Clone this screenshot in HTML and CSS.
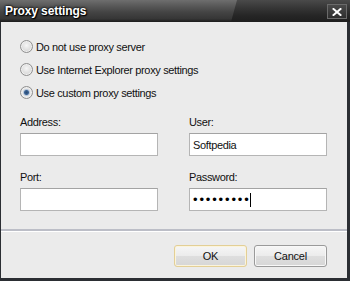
FILE: index.html
```html
<!DOCTYPE html>
<html>
<head>
<meta charset="utf-8">
<link rel="stylesheet" href="styles.css">
</head>
<body>
<div class="window">
  <div class="titlebar">
    <span class="title">Proxy settings</span>
    <span class="close">
      <svg width="10" height="8" viewBox="0 0 10 8"><path d="M1.5 1 L8.5 7 M8.5 1 L1.5 7" stroke="#fff" stroke-width="2" stroke-linecap="square" fill="none"/></svg>
    </span>
  </div>
  <div class="client">
    <div class="main">
      <div class="radios">
        <div class="radio-row"><span class="radio"></span><span class="txt">Do not use proxy server</span></div>
        <div class="radio-row"><span class="radio"></span><span class="txt">Use Internet Explorer proxy settings</span></div>
        <div class="radio-row"><span class="radio checked"></span><span class="txt">Use custom proxy settings</span></div>
      </div>
      <div class="fields">
        <div class="field"><div class="label">Address:</div><div class="textbox"></div></div>
        <div class="field"><div class="label">User:</div><div class="textbox"><span class="value">Softpedia</span></div></div>
        <div class="field"><div class="label">Port:</div><div class="textbox"></div></div>
        <div class="field"><div class="label">Password:</div><div class="textbox"><span class="dots">•••••••••</span><span class="caret"></span></div></div>
      </div>
    </div>
    <div class="footer">
      <button class="btn default">OK</button>
      <button class="btn">Cancel</button>
    </div>
  </div>
</div>
</body>
</html>
```
FILE: styles.css
```css
html, body {
  margin: 0;
  padding: 0;
}
body {
  width: 350px;
  height: 281px;
  overflow: hidden;
  background: #2b2e33;
  font-family: "Liberation Sans", Arial, sans-serif;
  font-size: 11px;
  letter-spacing: -0.35px;
  color: #111;
}
.window {
  display: flex;
  flex-direction: column;
  height: 281px;
}
.titlebar {
  position: relative;
  height: 22px;
  box-sizing: border-box;
  display: flex;
  justify-content: space-between;
  align-items: flex-start;
  padding: 0 3px 0 5px;
  background: linear-gradient(to bottom, #6e6e6e 0%, #5a5a5a 25%, #444 55%, #363636 85%, #1c1c1c 100%);
  overflow: hidden;
}
.titlebar::after {
  content: "";
  position: absolute;
  top: 0;
  right: 0;
  bottom: 0;
  width: 119px;
  background: linear-gradient(to bottom, #4a4a4a 0%, #343434 40%, #262626 70%, #1e1e1e 100%);
  clip-path: polygon(6px 0, 100% 0, 100% 100%, 0 100%);
}
.title {
  position: relative;
  z-index: 1;
  margin-top: 4px;
  font-size: 12px;
  font-weight: bold;
  letter-spacing: -0.1px;
  line-height: 15px;
  color: #fff;
  text-shadow: 0 0 2px #000, 0 0 3px #000, 1px 1px 1px #000;
}
.close {
  position: relative;
  z-index: 1;
  margin-top: 4px;
  width: 20px;
  height: 15px;
  box-sizing: border-box;
  border: 1px solid #6a6a6a;
  background: linear-gradient(to bottom, #4a4a4a, #2e2e2e);
  display: flex;
  align-items: center;
  justify-content: center;
}
.close svg {
  display: block;
}
.client {
  flex: 1;
  margin: 0 3px 3px 1px;
  background: #ebebeb;
  display: flex;
  flex-direction: column;
}
.main {
  flex: 1;
  padding: 13px 0 0 19px;
}
.radio-row {
  height: 23px;
  display: flex;
  align-items: center;
}
.radio {
  width: 13px;
  height: 13px;
  box-sizing: border-box;
  border-radius: 50%;
  border: 1px solid #8f8f8f;
  background: radial-gradient(circle at 50% 40%, #f6f6f6 0%, #e0e0e0 50%, #c8c8c8 100%);
  margin-right: 3px;
  flex: none;
  box-shadow: inset 0 0 0 1px #f0f0f0;
}
.radio.checked {
  background: radial-gradient(circle at 50% 50%, #2a4a70 0, #3a6294 2px, #b9c8da 3px, #e8e8e8 4px, #d4d4d4 100%);
}
.txt {
  line-height: 14px;
  white-space: nowrap;
}
.fields {
  margin-top: 11px;
  display: grid;
  grid-template-columns: 138px 138px;
  column-gap: 31px;
  row-gap: 14px;
}
.label {
  line-height: 14px;
  margin-bottom: 4px;
}
.textbox {
  height: 23px;
  box-sizing: border-box;
  background: #fff;
  border: 1px solid #b5b5b5;
  border-top-color: #a3a3a3;
  display: flex;
  align-items: center;
  padding-left: 3px;
}
.value {
  line-height: 14px;
}
.dots {
  font-size: 13px;
  letter-spacing: 1.85px;
  line-height: 14px;
  color: #000;
}
.caret {
  width: 1px;
  height: 14px;
  background: #000;
  margin-left: -1px;
}
.footer {
  border-top: 2px solid #bcbec7;
  box-shadow: inset 0 1px 0 #fff;
  height: 49px;
  box-sizing: border-box;
  padding: 14px 20px 0 0;
  display: flex;
  justify-content: flex-end;
  gap: 7px;
}
.btn {
  width: 73px;
  height: 22px;
  box-sizing: border-box;
  border: 1px solid #9a9a9a;
  border-radius: 3px;
  background: linear-gradient(to bottom, #f6f6f6 0%, #ececec 48%, #dedede 52%, #d6d6d6 100%);
  box-shadow: inset 0 0 0 1px #f8f8f8;
  font-family: "Liberation Sans", Arial, sans-serif;
  font-size: 11px;
  letter-spacing: -0.2px;
  color: #111;
  padding: 0;
  margin: 0;
}
.btn.default {
  border-color: #e3cf96;
  box-shadow: inset 0 0 0 1px #fbf4dc;
}
```
